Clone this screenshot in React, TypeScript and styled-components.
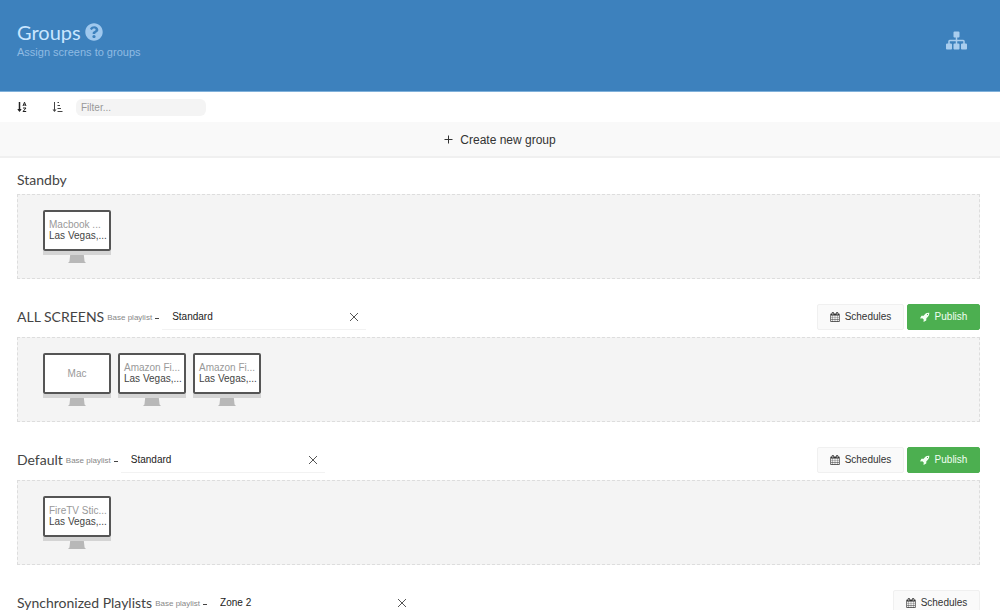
import React from "react";
import styled, { createGlobalStyle } from "styled-components";
import { FaQuestionCircle } from "react-icons/fa";

const GlobalStyle = createGlobalStyle`
  *, *::before, *::after { box-sizing: border-box; }
  body {
    margin: 0;
    background: #fff;
    color: #444;
    font: 11px/16px "Liberation Sans", Arial, sans-serif;
  }
  button, input, select { font: inherit; color: inherit; margin: 0; }
  button { cursor: pointer; }
`;

const display = `font-family: Lato, "Open Sans", sans-serif;`;

const Header = styled.header`
  display: flex;
  justify-content: space-between;
  align-items: flex-start;
  padding: 21px 32px 31px 17px;
  background: #3d81bd;
  border-bottom: 1px solid #7fb0da;
  color: #9fc8ee;
`;

const TitleRow = styled.div`
  display: flex;
  align-items: center;
  gap: 4px;
`;

const Title = styled.h1`
  ${display}
  margin: 0;
  font-size: 20px;
  line-height: 22px;
  font-weight: 400;
  color: #c9e6ff;
`;

const Subtitle = styled.p`
  margin: 0;
  padding-top: 1px;
  line-height: 16px;
  color: #8fbbe3;
`;

const PlainButton = styled.button`
  display: inline-flex;
  align-items: center;
  justify-content: center;
  padding: 0;
  border: 0;
  background: none;
`;

const SitemapButton = styled(PlainButton)`
  padding: 9px 1px;
`;

const Toolbar = styled.div`
  display: flex;
  align-items: center;
  height: 30px;
  padding: 0 17px;
`;

const SortButtons = styled.div`
  display: flex;
  gap: 24px;
  margin-right: 13px;
`;

const FilterInput = styled.input`
  width: 130px;
  height: 17px;
  padding: 0 5px;
  border: 0;
  border-radius: 6px;
  background: #f4f4f4;
  font-size: 10px;
  &::placeholder { color: #999; opacity: 1; }
`;

const CreateButton = styled(PlainButton)`
  width: 100%;
  height: 36px;
  padding-top: 1px;
  gap: 7px;
  font-size: 12px;
  background: #f9f9f9;
  border-bottom: 2px solid #f0f0f0;
  color: #333;
`;

const Main = styled.main`
  display: flex;
  flex-direction: column;
  gap: 25px;
  padding: 12px 20px 25px 17px;
`;

const GroupHead = styled.div<{ $plain: boolean }>`
  display: flex;
  align-items: center;
  justify-content: space-between;
  height: ${(p) => (p.$plain ? 24 : 33)}px;
  padding-bottom: ${(p) => (p.$plain ? 4 : 7)}px;
`;

const HeadPart = styled.div`
  display: flex;
  align-items: center;
  gap: 3px;
`;

const GroupName = styled.h2`
  ${display}
  margin: 0;
  font-size: 14px;
  line-height: 20px;
  font-weight: 400;
  color: #444;
`;

const PlaylistLabel = styled.label`
  display: flex;
  align-items: center;
  gap: 3px;
  font-size: 8px;
  color: #888;
  padding-top: 2px;
`;

const Dash = styled.span`
  width: 4px;
  height: 1px;
  background: #444;
`;

const SelectBox = styled.div`
  display: flex;
  align-items: center;
  width: 204px;
  height: 26px;
  padding-right: 7px;
  border-bottom: 1px solid #f2f2f2;
`;

const Select = styled.select`
  flex: 1;
  appearance: none;
  padding: 0 10px;
  border: 0;
  background: none;
  font-size: 10px;
  color: #222;
`;

const ActionButton = styled(PlainButton)<{ $primary?: boolean }>`
  height: 26px;
  gap: 5px;
  width: ${(p) => (p.$primary ? 73 : 87)}px;
  border: 1px solid ${(p) => (p.$primary ? "#4caf50" : "#f0f0f0")};
  border-radius: 2px;
  background: ${(p) => (p.$primary ? "#4caf50" : "#fafafa")};
  color: ${(p) => (p.$primary ? "#f2fff2" : "#333")};
  font-size: 10px;
`;

const ScreenArea = styled.div`
  display: flex;
  gap: 7px;
  height: 85px;
  padding: 15px 25px;
  background: #f4f4f4;
  border: 1px dashed #ddd;
`;

const Monitor = styled.div`
  display: flex;
  flex-direction: column;
  align-items: center;
  width: 68px;
`;

const Display = styled.div<{ $centered: boolean }>`
  display: flex;
  flex-direction: column;
  justify-content: center;
  width: 100%;
  height: 41px;
  padding: ${(p) => (p.$centered ? "0" : "0 0 1px 4px")};
  border: 2px solid #555;
  border-radius: 2px;
  background: #fff;
  font-size: 10px;
  line-height: 11px;
  text-align: ${(p) => (p.$centered ? "center" : "left")};
`;

const Line = styled.span<{ $muted?: boolean }>`
  white-space: nowrap;
  color: ${(p) => (p.$muted ? "#999" : "#444")};
`;

const Chin = styled.div`
  width: 100%;
  height: 4px;
  background: #d4d4d4;
`;

const Stand = styled.div`
  width: 18px;
  height: 8px;
  background: #b8b8b8;
  clip-path: polygon(12% 0, 88% 0, 92% 80%, 100% 100%, 0 100%, 8% 80%);
`;

const SitemapIcon = () => (
  <svg width="21" height="21" viewBox="0 0 1792 1792" fill="#a9cdee" aria-hidden="true">
    <path d="M1792 1248v320q0 40-28 68t-68 28h-320q-40 0-68-28t-28-68v-320q0-40 28-68t68-28h96v-192h-512v192h96q40 0 68 28t28 68v320q0 40-28 68t-68 28h-320q-40 0-68-28t-28-68v-320q0-40 28-68t68-28h96v-192h-512v192h96q40 0 68 28t28 68v320q0 40-28 68t-68 28h-320q-40 0-68-28t-28-68v-320q0-40 28-68t68-28h96v-192q0-52 38-90t90-38h512v-192h-96q-40 0-68-28t-28-68v-320q0-40 28-68t68-28h320q40 0 68 28t28 68v320q0 40-28 68t-68 28h-96v192h512q52 0 90 38t38 90v192h96q40 0 68 28t28 68z" />
  </svg>
);

const CalendarIcon = () => (
  <svg width="10" height="10" viewBox="0 0 1792 1792" fill="#333" aria-hidden="true">
    <path d="M192 1664h288v-288h-288v288zM544 1664h320v-288h-320v288zM192 1312h288v-320h-288v320zM544 1312h320v-320h-320v320zM192 928h288v-288h-288v288zM928 1664h320v-288h-320v288zM544 928h320v-288h-320v288zM1312 1664h288v-288h-288v288zM928 1312h320v-320h-320v320zM576 448v-288q0-13-9.500-22.500t-22.500-9.500h-64q-13 0-22.500 9.500t-9.500 22.500v288q0 13 9.500 22.500t22.500 9.500h64q13 0 22.500-9.500t9.500-22.500zM1312 1312h288v-320h-288v320zM928 928h320v-288h-320v288zM1312 928h288v-288h-288v288zM1344 448v-288q0-13-9.500-22.500t-22.500-9.500h-64q-13 0-22.500 9.500t-9.500 22.500v288q0 13 9.500 22.500t22.500 9.500h64q13 0 22.500-9.500t9.500-22.500zM1728 384v1280q0 52-38 90t-90 38h-1408q-52 0-90-38t-38-90v-1280q0-52 38-90t90-38h128v-96q0-66 47-113t113-47h64q66 0 113 47t47 113v96h384v-96q0-66 47-113t113-47h64q66 0 113 47t47 113v96h128q52 0 90 38t38 90z" />
  </svg>
);

const RocketIcon = () => (
  <svg width="10" height="10" viewBox="0 0 1792 1792" fill="currentColor" aria-hidden="true">
    <path d="M1440 448q0-40-28-68t-68-28-68 28-28 68 28 68 68 28 68-28 28-68zM1664 160q0 249-75.500 430.500t-253.500 360.500q-81 80-195 176l-20 379q-2 16-16 26l-384 224q-7 4-16 4-12 0-23-9l-64-64q-13-14-8-32l85-276-281-281-276 85q-3 1-9 1-14 0-23-9l-64-64q-17-19-5-39l224-384q10-14 26-16l379-20q96-114 176-195 188-187 358-258t431-71q14 0 24 9.500t10 22.500z" />
  </svg>
);

const SortNameIcon = () => (
  <svg width="11" height="12" viewBox="0 0 11 12" fill="none" stroke="#222" aria-hidden="true">
    <path d="M2.500 1V10" strokeWidth="1.500" />
    <path d="M0.300 8H4.700L2.500 11z" fill="#222" stroke="none" />
    <path d="M6 5L7.500 1.200L9 5M6.500 4H8.500M6 7H9L6 10.500H9.200" />
  </svg>
);

const SortAmountIcon = () => (
  <svg width="11" height="12" viewBox="0 0 11 12" fill="none" stroke="#444" aria-hidden="true">
    <path d="M2.500 1V10" />
    <path d="M0.500 8.500H4.500L2.500 11z" fill="#444" stroke="none" />
    <path d="M5.500 1.500H7M5.500 4.500H8M5.500 7.500H9M5.500 10.500H10.500" />
  </svg>
);

const PlusIcon = () => (
  <svg width="9" height="9" viewBox="0 0 9 9" stroke="#333" aria-hidden="true">
    <path d="M4.500 0.500V8.500M0.500 4.500H8.500" />
  </svg>
);

const CloseIcon = () => (
  <svg width="10" height="10" viewBox="0 0 10 10" stroke="#555" aria-hidden="true">
    <path d="M1 1L9 9M9 1L1 9" />
  </svg>
);

type Screen = { name: string; place?: string };
type Group = { name: string; playlist?: string; publish?: boolean; screens: Screen[] };

const groups: Group[] = [
  { name: "Standby", screens: [{ name: "Macbook ...", place: "Las Vegas,..." }] },
  {
    name: "ALL SCREENS",
    playlist: "Standard",
    publish: true,
    screens: [
      { name: "Mac" },
      { name: "Amazon Fi...", place: "Las Vegas,..." },
      { name: "Amazon Fi...", place: "Las Vegas,..." },
    ],
  },
  {
    name: "Default",
    playlist: "Standard",
    publish: true,
    screens: [{ name: "FireTV Stic...", place: "Las Vegas,..." }],
  },
  { name: "Synchronized Playlists", playlist: "Zone 2", screens: [] },
];

const ScreenTile = ({ name, place }: Screen) => (
  <Monitor>
    <Display $centered={!place}>
      <Line $muted>{name}</Line>
      {place && <Line>{place}</Line>}
    </Display>
    <Chin />
    <Stand />
  </Monitor>
);

const GroupSection = ({ group, id }: { group: Group; id: string }) => (
  <section>
    <GroupHead $plain={!group.playlist}>
      <HeadPart>
        <GroupName>{group.name}</GroupName>
        {group.playlist && (
          <>
            <PlaylistLabel htmlFor={id}>
              Base playlist <Dash />
            </PlaylistLabel>
            <SelectBox>
              <Select id={id} defaultValue={group.playlist}>
                <option>{group.playlist}</option>
              </Select>
              <PlainButton type="button" aria-label="Clear playlist">
                <CloseIcon />
              </PlainButton>
            </SelectBox>
          </>
        )}
      </HeadPart>
      {group.playlist && (
        <HeadPart>
          <ActionButton type="button">
            <CalendarIcon /> Schedules
          </ActionButton>
          {group.publish && (
            <ActionButton type="button" $primary>
              <RocketIcon /> Publish
            </ActionButton>
          )}
        </HeadPart>
      )}
    </GroupHead>
    <ScreenArea>
      {group.screens.map((s, i) => (
        <ScreenTile key={i} {...s} />
      ))}
    </ScreenArea>
  </section>
);

export default function App() {
  return (
    <>
      <GlobalStyle />
      <Header>
        <div>
          <TitleRow>
            <Title>Groups</Title>
            <FaQuestionCircle size={18} />
          </TitleRow>
          <Subtitle>Assign screens to groups</Subtitle>
        </div>
        <SitemapButton type="button" aria-label="Group hierarchy">
          <SitemapIcon />
        </SitemapButton>
      </Header>
      <Toolbar>
        <SortButtons>
          <PlainButton type="button" aria-label="Sort by name">
            <SortNameIcon />
          </PlainButton>
          <PlainButton type="button" aria-label="Sort by size">
            <SortAmountIcon />
          </PlainButton>
        </SortButtons>
        <FilterInput type="text" placeholder="Filter..." aria-label="Filter groups" />
      </Toolbar>
      <CreateButton type="button">
        <PlusIcon /> Create new group
      </CreateButton>
      <Main>
        {groups.map((g, i) => (
          <GroupSection key={g.name} group={g} id={`playlist-${i}`} />
        ))}
      </Main>
    </>
  );
}
